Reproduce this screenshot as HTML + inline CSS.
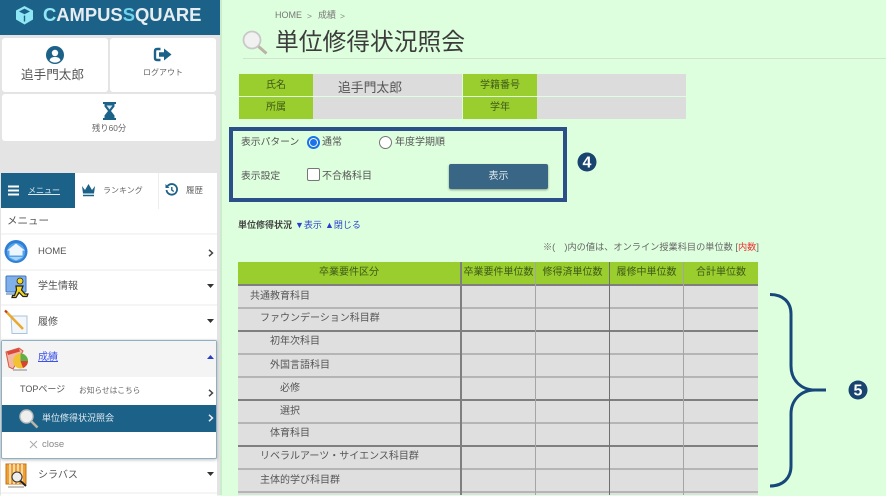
<!DOCTYPE html>
<html lang="ja"><head><meta charset="utf-8">
<style>
html,body{margin:0;padding:0}
body{width:886px;height:495px;overflow:hidden;position:relative;background:#deffde;font-family:"Liberation Sans","Noto Sans CJK JP",sans-serif;color:#555}
.b{position:absolute;box-sizing:border-box}
.c{position:absolute;background:#fff;border-radius:3px}
.t{position:absolute;white-space:nowrap;line-height:1}
svg{position:absolute;overflow:visible}
.row{position:absolute;left:1px;width:216px;background:#fff}
.g{position:absolute;background:#9acd2e;color:#3f5a18;font-size:10px;text-align:center}
.gy{position:absolute;background:#dcdcdc}
.l{position:absolute;font-size:10px;color:#555;line-height:1;white-space:nowrap}
.h{position:absolute;left:238px;width:520px}
.v{position:absolute;top:262px;height:233px}
.th{position:absolute;top:262px;height:22px;line-height:22px;text-align:center;font-size:10px;color:#3f5a18;white-space:nowrap}
</style></head><body>
<!-- sidebar -->
<div class="b" style="left:0;top:0;width:220px;height:495px;background:#e4e4e4"></div>
<div class="b" style="left:220px;top:0;width:2px;height:495px;background:#cdeccd"></div>
<div class="b" style="left:0;top:0;width:220px;height:35px;background:#1c6288"></div>
<svg style="left:15px;top:5px" width="19" height="20" viewBox="0 0 19 20"><path d="M9.500 1L18 5.500V14.500L9.500 19.500L1 14.500V5.500Z" fill="#8fe6f4"/><path d="M4 6.500L9.500 3.600L15 6.500L9.500 9.300Z" fill="#1c6288"/><path d="M9.500 10.600V16.500" stroke="#1c6288" stroke-width="1.400"/></svg>
<div class="t" style="left:43px;top:6px;font-size:18.400px;font-weight:bold;color:#e6edf1"><span style="color:#8fe6f4">C</span>AMPUS<span style="color:#6fd3ee">S</span>QUARE</div>

<div class="c" style="left:2px;top:38px;width:106px;height:54px"></div>
<div class="c" style="left:110px;top:38px;width:106px;height:54px"></div>
<div class="c" style="left:2px;top:94px;width:214px;height:47px"></div>
<svg style="left:46px;top:46px" width="18" height="18" viewBox="0 0 18 18"><circle cx="9" cy="9" r="9" fill="#1c6288"/><circle cx="9" cy="7" r="3.200" fill="#fff"/><path d="M3.500 14.200C4.500 11.600 6.500 11 9 11s4.500.6 5.500 3.200A7.500 7.500 0 0 1 3.500 14.200Z" fill="#fff"/></svg>
<div class="t" style="left:21px;top:69px;font-size:12.600px;color:#555">追手門太郎</div>
<svg style="left:154px;top:47px" width="18" height="16" viewBox="0 0 18 16"><path d="M6.500 2H3Q1 2 1 4V11Q1 13 3 13H6.500" fill="none" stroke="#1c6288" stroke-width="2.400"/><path d="M5 5.200H10V1.500L17.500 7.500L10 13.500V9.800H5Z" fill="#1c6288"/></svg>
<div class="t" style="left:143px;top:69px;font-size:8px;color:#666">ログアウト</div>
<svg style="left:102px;top:102px" width="15" height="18" viewBox="0 0 15 18"><path d="M1 1H14M1 17H14" stroke="#1c6288" stroke-width="2"/><path d="M2.500 2V4.500L6 9L2.500 13.500V16H12.500V13.500L9 9L12.500 4.500V2Z" fill="#1c6288"/><path d="M4.500 3.500H10.500L7.500 7.500Z" fill="#fff" opacity=".85"/></svg>
<div class="t" style="left:92px;top:124px;font-size:8.300px;color:#666">残り60分</div>

<div class="b" style="left:1px;top:173px;width:216px;height:36px;background:#fff"></div>
<div class="b" style="left:1px;top:173px;width:74px;height:35px;background:#1c6288"></div>
<div class="b" style="left:158px;top:173px;width:1px;height:36px;background:#eee"></div>
<svg style="left:8px;top:185px" width="11" height="11" viewBox="0 0 11 11"><path d="M0 1.500H11M0 5.500H11M0 9.500H11" stroke="#fff" stroke-width="2"/></svg>
<div class="t" style="left:28px;top:187px;font-size:8px;color:#dfeaf0;text-decoration:underline">メニュー</div>
<svg style="left:81px;top:183px" width="15" height="14" viewBox="0 0 15 14"><path d="M1 3L4 7L7.500 1L11 7L14 3L13 10.500H2Z" fill="#1c6288"/><path d="M2 12.500H13" stroke="#1c6288" stroke-width="1.500"/></svg>
<div class="t" style="left:103px;top:187px;font-size:8px;color:#666">ランキング</div>
<svg style="left:165px;top:183px" width="13" height="13" viewBox="0 0 13 13"><path d="M2.500 3.200A5.300 5.300 0 1 1 1.500 7" fill="none" stroke="#1c6288" stroke-width="1.800"/><path d="M.5 1V5H4.500Z" fill="#1c6288"/><path d="M6.800 4V7L8.800 8.500" fill="none" stroke="#1c6288" stroke-width="1.400"/></svg>
<div class="t" style="left:186px;top:186px;font-size:8.500px;color:#666">履歴</div>

<div class="b" style="left:1px;top:209px;width:216px;height:286px;background:#f5f5f5"></div>
<div class="row" style="top:209px;height:24px"></div>
<div class="t" style="left:7px;top:216px;font-size:10.500px;color:#555">メニュー</div>

<div class="row" style="top:235px;height:34px"></div>
<div class="row" style="top:271px;height:33px"></div>
<div class="row" style="top:306px;height:33px"></div>
<div class="row" style="top:459px;height:33px"></div>
<div class="row" style="top:494px;height:2px"></div>

<svg style="left:4px;top:240px" width="24" height="23" viewBox="0 0 24 23"><circle cx="12" cy="11.500" r="11.500" fill="#2f7fd6"/><circle cx="12" cy="12" r="9" fill="#5aa5ea"/><path d="M12 3.500L21 10.500H18.500V15.500H5.500V10.500H3Z" fill="#eef6fd"/><path d="M5 17H19L12 20.500Z" fill="#a9d4f5"/></svg>
<div class="t" style="left:38px;top:247px;font-size:9.500px;color:#555">HOME</div>
<svg style="left:208px;top:249px" width="6" height="8" viewBox="0 0 6 8"><path d="M1 .8L4.500 4L1 7.200" fill="none" stroke="#444" stroke-width="1.500"/></svg>

<svg style="left:5px;top:275px" width="24" height="24" viewBox="0 0 24 24"><rect x="1" y="1" width="20" height="16" rx="1" fill="#7fb0ea" stroke="#3d76bf"/><path d="M1 19H14" stroke="#9cb7d8" stroke-width="2"/><circle cx="15" cy="6" r="3" fill="#f6d81f" stroke="#222" stroke-width=".8"/><path d="M11 11H18L16.500 15L20 19L23 19L22 21.500H18L14 17.500L11 22.500H7L7.500 20.500H9.500L11.500 15Z" fill="#f6d81f" stroke="#222" stroke-width="1.200"/></svg>
<div class="t" style="left:38px;top:282px;font-size:10px;color:#555">学生情報</div>
<svg style="left:207px;top:284px" width="7" height="4"><path d="M0 0H7L3.500 4Z" fill="#333"/></svg>

<svg style="left:4px;top:310px" width="24" height="25" viewBox="0 0 24 25"><path d="M7 6H23V23.500H8Z" fill="#f3f6fb" stroke="#a9c4dd"/><path d="M1.500 1L19 19" stroke="#e8a92c" stroke-width="2.500"/><path d="M1 .5L3 2.500" stroke="#c0392b" stroke-width="2"/></svg>
<div class="t" style="left:38px;top:318px;font-size:10px;color:#555">履修</div>
<svg style="left:207px;top:319px" width="7" height="4"><path d="M0 0H7L3.500 4Z" fill="#333"/></svg>

<!-- 成績 box -->
<div class="b" style="left:1px;top:340px;width:216px;height:119px;background:#fff;border:1px solid #8db0c4;border-radius:2px;box-shadow:0 1px 3px rgba(0,0,0,.25)"></div>
<div class="b" style="left:2px;top:341px;width:214px;height:36px;background:#f4f4f4"></div>
<svg style="left:5px;top:347px" width="25" height="25" viewBox="0 0 25 25"><path d="M1 5L14 1L18 4L8 22L4 20Z" fill="#f3b7a8" stroke="#d9583f" stroke-width="1"/><path d="M2 5L14 1.500L15 4.500L3 8Z" fill="#d9483a"/><circle cx="15.500" cy="14" r="7.500" fill="#f1c232"/><path d="M15.500 14V6.500A7.500 7.500 0 0 1 23 14Z" fill="#5fb04a"/><path d="M15.500 14H23A7.500 7.500 0 0 1 18 21Z" fill="#d8432f"/><path d="M8 23H22" stroke="#999" stroke-width="2" opacity=".6"/></svg>
<div class="t" style="left:38px;top:353px;font-size:10px;color:#3a52e8;text-decoration:underline">成績</div>
<svg style="left:207px;top:355px" width="7" height="4"><path d="M0 4H7L3.500 0Z" fill="#2a3fc0"/></svg>
<div class="t" style="left:20px;top:385px;font-size:9px;color:#555">TOPページ</div>
<div class="t" style="left:79px;top:387px;font-size:7.700px;color:#666">お知らせはこちら</div>
<svg style="left:208px;top:389px" width="6" height="8" viewBox="0 0 6 8"><path d="M1 .8L4.500 4L1 7.200" fill="none" stroke="#444" stroke-width="1.500"/></svg>
<div class="b" style="left:2px;top:405px;width:214px;height:27px;background:#1c6288"></div>
<svg style="left:19px;top:409px" width="20" height="20" viewBox="0 0 20 20"><circle cx="7.500" cy="7.500" r="6.500" fill="#eee" stroke="#bbb" stroke-width="1.400"/><path d="M12.500 12.500L18.500 18.500" stroke="#b9b3a8" stroke-width="2.600"/></svg>
<div class="t" style="left:42px;top:414px;font-size:9px;color:#dfe9ef">単位修得状況照会</div>
<svg style="left:208px;top:414px" width="6" height="8" viewBox="0 0 6 8"><path d="M1 .8L4.500 4L1 7.200" fill="none" stroke="#eef" stroke-width="1.500"/></svg>
<svg style="left:29px;top:440px" width="9" height="9"><path d="M1 1L8 8M8 1L1 8" stroke="#aaa" stroke-width="1"/></svg>
<div class="t" style="left:42px;top:440px;font-size:9.500px;color:#888">close</div>

<svg style="left:5px;top:463px" width="23" height="26" viewBox="0 0 23 26"><rect x="1" y="1" width="20" height="20" fill="#f0a030" stroke="#c4741a"/><path d="M5 1V21M9 1V21M13 1V21M17 1V21" stroke="#fff" stroke-width="1.200"/><circle cx="12" cy="14" r="5" fill="#eee" stroke="#333"/><path d="M15.500 18L21 23" stroke="#222" stroke-width="2"/><path d="M3 24H19" stroke="#888"/></svg>
<div class="t" style="left:38px;top:471px;font-size:10px;color:#555">シラバス</div>
<svg style="left:207px;top:472px" width="7" height="4"><path d="M0 0H7L3.500 4Z" fill="#333"/></svg>

<!-- page head -->
<div class="t" style="left:275px;top:11px;font-size:9px;color:#777">HOME</div>
<div class="t" style="left:307px;top:12px;font-size:8.500px;color:#888">&gt;</div>
<div class="t" style="left:318px;top:11px;font-size:9px;color:#777">成績</div>
<div class="t" style="left:340px;top:12px;font-size:8.500px;color:#888">&gt;</div>
<svg style="left:242px;top:30px" width="26" height="25" viewBox="0 0 26 25"><circle cx="10" cy="10" r="8.500" fill="#f1f1f1" stroke="#c8c8c8" stroke-width="1.800"/><path d="M16.500 16.500L24.500 23.500" stroke="#b9b3a8" stroke-width="3"/></svg>
<div class="t" style="left:275px;top:31px;font-size:23.750px;color:#3c3c3c">単位修得状況照会</div>
<div class="b" style="left:243px;top:58px;width:643px;height:1px;background:#d0e4d0"></div>

<!-- info table -->
<div class="g" style="left:239px;top:74px;width:74px;height:22px;line-height:23px">氏名</div>
<div class="gy" style="left:313px;top:74px;width:149px;height:22px"></div>
<div class="g" style="left:463px;top:74px;width:74px;height:22px;line-height:23px">学籍番号</div>
<div class="gy" style="left:537px;top:74px;width:149px;height:22px"></div>
<div class="g" style="left:239px;top:97px;width:74px;height:22px;line-height:22px">所属</div>
<div class="gy" style="left:313px;top:97px;width:149px;height:22px"></div>
<div class="g" style="left:463px;top:97px;width:74px;height:22px;line-height:22px">学年</div>
<div class="gy" style="left:537px;top:97px;width:149px;height:22px"></div>
<div class="t" style="left:338px;top:82px;font-size:12.800px;color:#555">追手門太郎</div>

<!-- form box -->
<div class="b" style="left:229px;top:127px;width:338px;height:75px;border:4px solid #2b4f88"></div>
<div class="t" style="left:241px;top:138px;font-size:9.800px;color:#555">表示パターン</div>
<div class="b" style="left:307px;top:136px;width:13px;height:13px;border-radius:50%;background:#fff;border:2px solid #1a73e8"></div>
<div class="b" style="left:310px;top:139px;width:7px;height:7px;border-radius:50%;background:#1a73e8"></div>
<div class="t" style="left:322px;top:138px;font-size:10px;color:#555">通常</div>
<div class="b" style="left:379px;top:136px;width:13px;height:13px;border-radius:50%;background:#fff;border:1px solid #777"></div>
<div class="t" style="left:395px;top:138px;font-size:10px;color:#555">年度学期順</div>
<div class="t" style="left:241px;top:172px;font-size:9.800px;color:#555">表示設定</div>
<div class="b" style="left:307px;top:168px;width:13px;height:13px;border-radius:2px;background:#fff;border:1px solid #777"></div>
<div class="t" style="left:322px;top:172px;font-size:10px;color:#555">不合格科目</div>
<div class="b" style="left:449px;top:164px;width:99px;height:25px;background:#3a6685;border-radius:2px;box-shadow:0 1px 2px rgba(0,0,0,.4);color:#dfe8ee;font-size:10px;text-align:center;line-height:25px">表示</div>
<svg style="left:577px;top:152px" width="20" height="20"><circle cx="10" cy="10" r="9.500" fill="#18446f"/><text x="10" y="15.500" text-anchor="middle" font-family="Liberation Sans" font-weight="bold" font-size="16" fill="#fff">4</text></svg>

<div class="t" style="left:238px;top:221px;font-size:9px;font-weight:bold;color:#444">単位修得状況</div>
<div class="t" style="left:295px;top:221px;font-size:9px;color:#2a3fd0">▼表示</div>
<div class="t" style="left:325px;top:221px;font-size:9px;color:#2a3fd0">▲閉じる</div>
<div class="t" style="left:543px;top:243px;font-size:9.200px;color:#666">※(　)内の値は、オンライン授業科目の単位数 [<span style="color:#f03030">内数</span>]</div>

<!-- main table -->
<div class="b" style="left:238px;top:262px;width:520px;height:233px;background:#dfdfdf"></div>
<div class="b" style="left:238px;top:262px;width:520px;height:22px;background:#9acd2e"></div>
<div class="h" style="top:284px;height:2px;background:#7f7f7f"></div>
<div class="h" style="top:307px;height:2px;background:#b5b5b5"></div>
<div class="h" style="top:330px;height:2px;background:#7f7f7f"></div>
<div class="h" style="top:353px;height:2px;background:#b5b5b5"></div>
<div class="h" style="top:376px;height:2px;background:#b5b5b5"></div>
<div class="h" style="top:399px;height:2px;background:#7f7f7f"></div>
<div class="h" style="top:422px;height:2px;background:#b5b5b5"></div>
<div class="h" style="top:445px;height:2px;background:#7f7f7f"></div>
<div class="h" style="top:468px;height:2px;background:#b5b5b5"></div>
<div class="h" style="top:491px;height:2px;background:#b5b5b5"></div>
<div class="v" style="left:460px;width:2px;background:#7f7f7f"></div>
<div class="v" style="left:535px;width:1px;background:#a5a5a5"></div>
<div class="v" style="left:609px;width:1px;background:#6f6f6f"></div>
<div class="v" style="left:683px;width:1px;background:#a5a5a5"></div>
<div class="th" style="left:238px;width:222px">卒業要件区分</div>
<div class="th" style="left:462px;width:73px">卒業要件単位数</div>
<div class="th" style="left:536px;width:73px">修得済単位数</div>
<div class="th" style="left:610px;width:73px">履修中単位数</div>
<div class="th" style="left:684px;width:74px">合計単位数</div>
<div class="l" style="left:250px;top:292px">共通教育科目</div>
<div class="l" style="left:260px;top:314px">ファウンデーション科目群</div>
<div class="l" style="left:270px;top:337px">初年次科目</div>
<div class="l" style="left:270px;top:361px">外国言語科目</div>
<div class="l" style="left:280px;top:384px">必修</div>
<div class="l" style="left:280px;top:407px">選択</div>
<div class="l" style="left:270px;top:429px">体育科目</div>
<div class="l" style="left:260px;top:452px">リベラルアーツ・サイエンス科目群</div>
<div class="l" style="left:260px;top:476px">主体的学び科目群</div>

<!-- brace -->
<svg style="left:765px;top:290px" width="70" height="200" viewBox="0 0 70 200"><path d="M5 4.500C18 4.500 26 12 26 24V76C26 90 36 100 50 100M5 196C18 196 26 188 26 176V124C26 110 36 100 50 100H61" fill="none" stroke="#18477a" stroke-width="3"/></svg>
<svg style="left:848px;top:380px" width="20" height="20"><circle cx="10" cy="10" r="9.500" fill="#18446f"/><text x="10" y="15.500" text-anchor="middle" font-family="Liberation Sans" font-weight="bold" font-size="16" fill="#fff">5</text></svg>
</body></html>
